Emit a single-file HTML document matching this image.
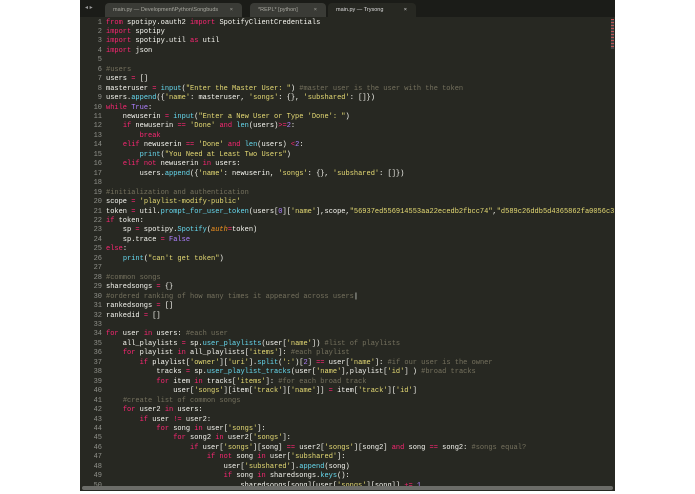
<!DOCTYPE html>
<html><head><meta charset="utf-8"><style>
body{margin:0;width:695px;height:494px;background:#fff;overflow:hidden;position:relative}
#ed{position:absolute;left:80px;top:0;width:535px;height:491px;background:#272822;overflow:hidden}
#tabs{position:absolute;left:0;top:0;width:535px;height:17px;background:#1b1c18}
.tab{position:absolute;top:3px;height:14px;background:#3a3b36;border-radius:4px 4px 0 0;font:5.5px "Liberation Sans",sans-serif;color:#a8a8a0;line-height:14px;padding-left:8px;box-sizing:border-box;white-space:nowrap;overflow:hidden}
.tab.a{background:#272822;color:#ddd}
.tab i{position:absolute;right:9px;font-style:normal}
#code{position:absolute;left:0;top:18.5px;font:7px/9.45px "Liberation Mono",monospace;color:#f8f8f2;white-space:pre}
.ln{display:inline-block;width:22px;text-align:right;color:#8f908a;margin-right:4px}
.k{color:#f92672}.s{color:#e6db74}.c{color:#75715e}.f{color:#66d9ef}.n{color:#ae81ff}.o{color:#fd971f;font-style:italic}
#sb{position:absolute;left:2px;top:486px;width:531px;height:4px;background:#6b6c68;border-radius:2px}
#mm{position:absolute;left:531px;top:19px;width:3px;height:30px;background:repeating-linear-gradient(#b55 0 1px,#444 1px 3px)}
</style></head><body>
<div id="ed">
<div id="tabs">
<div style="position:absolute;left:5px;top:4px;color:#999;font:6px sans-serif">◂ ▸</div>
<div class="tab" style="left:25px;width:137px">main.py — Development\Python\Songbuds<i>×</i></div>
<div class="tab" style="left:170px;width:76px">*REPL* [python]<i>×</i></div>
<div class="tab a" style="left:248px;width:88px">main.py — Trysong<i>×</i></div>
</div>
<div id="mm"></div>
<div id="code"><span class="ln">1</span><span class="k">from</span> spotipy.oauth2 <span class="k">import</span> SpotifyClientCredentials
<span class="ln">2</span><span class="k">import</span> spotipy
<span class="ln">3</span><span class="k">import</span> spotipy.util <span class="k">as</span> util
<span class="ln">4</span><span class="k">import</span> json
<span class="ln">5</span>
<span class="ln">6</span><span class="c">#users</span>
<span class="ln">7</span>users <span class="k">=</span> []
<span class="ln">8</span>masteruser <span class="k">=</span> <span class="f">input</span>(<span class="s">"Enter the Master User: "</span>) <span class="c">#master user is the user with the token</span>
<span class="ln">9</span>users.<span class="f">append</span>({<span class="s">'name'</span>: masteruser, <span class="s">'songs'</span>: {}, <span class="s">'subshared'</span>: []})
<span class="ln">10</span><span class="k">while</span> <span class="n">True</span>:
<span class="ln">11</span>    newuserin <span class="k">=</span> <span class="f">input</span>(<span class="s">"Enter a New User or Type 'Done': "</span>)
<span class="ln">12</span>    <span class="k">if</span> newuserin <span class="k">==</span> <span class="s">'Done'</span> <span class="k">and</span> <span class="f">len</span>(users)<span class="k">&gt;=</span><span class="n">2</span>:
<span class="ln">13</span>        <span class="k">break</span>
<span class="ln">14</span>    <span class="k">elif</span> newuserin <span class="k">==</span> <span class="s">'Done'</span> <span class="k">and</span> <span class="f">len</span>(users) <span class="k">&lt;</span><span class="n">2</span>:
<span class="ln">15</span>        <span class="f">print</span>(<span class="s">"You Need at Least Two Users"</span>)
<span class="ln">16</span>    <span class="k">elif not</span> newuserin <span class="k">in</span> users:
<span class="ln">17</span>        users.<span class="f">append</span>({<span class="s">'name'</span>: newuserin, <span class="s">'songs'</span>: {}, <span class="s">'subshared'</span>: []})
<span class="ln">18</span>
<span class="ln">19</span><span class="c">#initialization and authentication</span>
<span class="ln">20</span>scope <span class="k">=</span> <span class="s">'playlist-modify-public'</span>
<span class="ln">21</span>token <span class="k">=</span> util.<span class="f">prompt_for_user_token</span>(users[<span class="n">0</span>][<span class="s">'name'</span>],scope,<span class="s">"56937ed556914553aa22ecedb2fbcc74"</span>,<span class="s">"d589c26ddb5d4365862fa0056c3"</span>
<span class="ln">22</span><span class="k">if</span> token:
<span class="ln">23</span>    sp <span class="k">=</span> spotipy.<span class="f">Spotify</span>(<span class="o">auth</span><span class="k">=</span>token)
<span class="ln">24</span>    sp.trace <span class="k">=</span> <span class="n">False</span>
<span class="ln">25</span><span class="k">else</span>:
<span class="ln">26</span>    <span class="f">print</span>(<span class="s">"can't get token"</span>)
<span class="ln">27</span>
<span class="ln">28</span><span class="c">#common songs</span>
<span class="ln">29</span>sharedsongs <span class="k">=</span> {}
<span class="ln">30</span><span class="c">#ordered ranking of how many times it appeared across users</span>|
<span class="ln">31</span>rankedsongs <span class="k">=</span> []
<span class="ln">32</span>rankedid <span class="k">=</span> []
<span class="ln">33</span>
<span class="ln">34</span><span class="k">for</span> user <span class="k">in</span> users: <span class="c">#each user</span>
<span class="ln">35</span>    all_playlists <span class="k">=</span> sp.<span class="f">user_playlists</span>(user[<span class="s">'name'</span>]) <span class="c">#list of playlists</span>
<span class="ln">36</span>    <span class="k">for</span> playlist <span class="k">in</span> all_playlists[<span class="s">'items'</span>]: <span class="c">#each playlist</span>
<span class="ln">37</span>        <span class="k">if</span> playlist[<span class="s">'owner'</span>][<span class="s">'uri'</span>].<span class="f">split</span>(<span class="s">':'</span>)[<span class="n">2</span>] <span class="k">==</span> user[<span class="s">'name'</span>]: <span class="c">#if our user is the owner</span>
<span class="ln">38</span>            tracks <span class="k">=</span> sp.<span class="f">user_playlist_tracks</span>(user[<span class="s">'name'</span>],playlist[<span class="s">'id'</span>] ) <span class="c">#broad tracks</span>
<span class="ln">39</span>            <span class="k">for</span> item <span class="k">in</span> tracks[<span class="s">'items'</span>]: <span class="c">#for each broad track</span>
<span class="ln">40</span>                user[<span class="s">'songs'</span>][item[<span class="s">'track'</span>][<span class="s">'name'</span>]] <span class="k">=</span> item[<span class="s">'track'</span>][<span class="s">'id'</span>]
<span class="ln">41</span>    <span class="c">#create list of common songs</span>
<span class="ln">42</span>    <span class="k">for</span> user2 <span class="k">in</span> users:
<span class="ln">43</span>        <span class="k">if</span> user <span class="k">!=</span> user2:
<span class="ln">44</span>            <span class="k">for</span> song <span class="k">in</span> user[<span class="s">'songs'</span>]:
<span class="ln">45</span>                <span class="k">for</span> song2 <span class="k">in</span> user2[<span class="s">'songs'</span>]:
<span class="ln">46</span>                    <span class="k">if</span> user[<span class="s">'songs'</span>][song] <span class="k">==</span> user2[<span class="s">'songs'</span>][song2] <span class="k">and</span> song <span class="k">==</span> song2: <span class="c">#songs equal?</span>
<span class="ln">47</span>                        <span class="k">if not</span> song <span class="k">in</span> user[<span class="s">'subshared'</span>]:
<span class="ln">48</span>                            user[<span class="s">'subshared'</span>].<span class="f">append</span>(song)
<span class="ln">49</span>                            <span class="k">if</span> song <span class="k">in</span> sharedsongs.<span class="f">keys</span>():
<span class="ln">50</span>                                sharedsongs[song][user[<span class="s">'songs'</span>][song]] <span class="k">+=</span> <span class="n">1</span>
</div>
<div id="sb"></div>
</div>
</body></html>
